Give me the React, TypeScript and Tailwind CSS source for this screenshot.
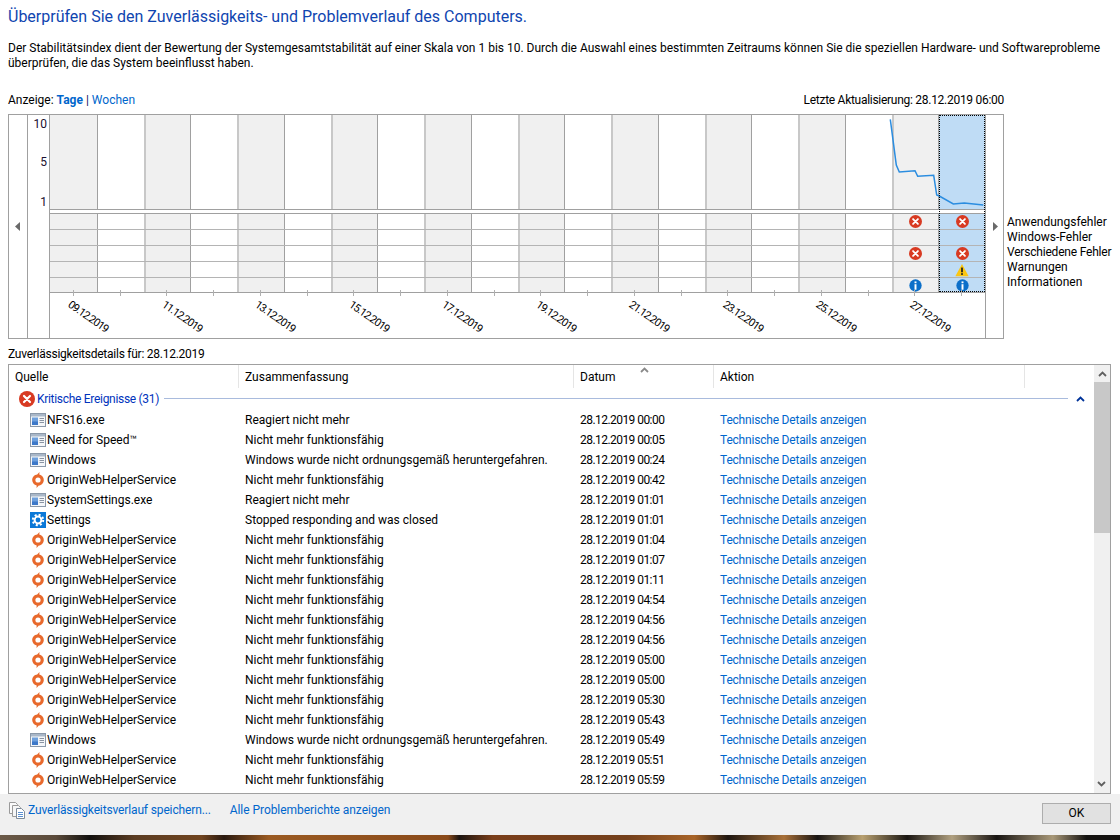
import React from "react";

const COLS = Array.from({ length: 20 }, (_, i) => i);
const DATES: Record<number, string> = { 0: "09.12.2019", 2: "11.12.2019", 4: "13.12.2019", 6: "15.12.2019", 8: "17.12.2019", 10: "19.12.2019", 12: "21.12.2019", 14: "23.12.2019", 16: "25.12.2019", 18: "27.12.2019" };

function ErrorIcon({ size = 13 }: { size?: number }) {
  return (
    <svg width={size} height={size} viewBox="0 0 16 16" className="shrink-0">
      <circle cx="8" cy="8" r="8" fill="#d83a22" />
      <path d="M5 5l6 6M11 5l-6 6" stroke="#fff" strokeWidth="2.2" strokeLinecap="round" />
    </svg>
  );
}
function InfoIcon() {
  return (
    <svg width="13" height="13" viewBox="0 0 16 16" className="shrink-0">
      <circle cx="8" cy="8" r="7.6" fill="#0b6fc9" />
      <rect x="6.8" y="3" width="2.4" height="2.2" fill="#fff" />
      <rect x="6.8" y="6.4" width="2.4" height="6.8" fill="#fff" />
    </svg>
  );
}
function WarnIcon() {
  return (
    <svg width="14" height="14" viewBox="0 0 16 16" className="shrink-0">
      <path d="M8 1L15.6 15H.4z" fill="#fbc612" />
      <rect x="7" y="5.2" width="2" height="5.4" fill="#222" />
      <rect x="7" y="11.6" width="2" height="2" fill="#222" />
    </svg>
  );
}
function AppIcon() {
  return (
    <svg width="16" height="16" viewBox="0 0 16 16" className="shrink-0">
      <rect x="0.5" y="1.5" width="15" height="13" fill="#f4f6f9" stroke="#8b98a8" />
      <rect x="1" y="2" width="14" height="2.5" fill="#a9b7c8" />
      <rect x="2" y="5.5" width="6" height="7.5" fill="#6d9fdc" />
      <rect x="2" y="9.5" width="6" height="3.5" fill="#3d78c8" />
      <path d="M9.5 6.5h4.5M9.5 8.5h4.5M9.5 10.5h4.5" stroke="#8a94a2" />
    </svg>
  );
}
function OriginIcon() {
  return (
    <svg width="16" height="16" viewBox="0 0 16 16" className="shrink-0">
      <path d="M9.5 0L9.3 2.6C12 3.4 13.8 5.5 13.8 8C13.8 11 11.5 13.3 8.8 13.6L6.5 16L6.7 13.4C4 12.7 2.2 10.6 2.2 8C2.2 5 4.5 2.7 7.2 2.4Z" fill="#e8692c" />
      <circle cx="8" cy="8" r="2.6" fill="#fff" />
    </svg>
  );
}
function GearIcon() {
  return (
    <svg width="16" height="16" viewBox="0 0 16 16" className="shrink-0">
      <rect width="16" height="16" fill="#0a78d7" />
      <circle cx="8" cy="8" r="5.2" fill="none" stroke="#fff" strokeWidth="2" strokeDasharray="2.04 2.04" />
      <circle cx="8" cy="8" r="3.4" fill="none" stroke="#fff" strokeWidth="2" />
    </svg>
  );
}
function SaveIcon() {
  return (
    <svg width="16" height="17" viewBox="0 0 16 17" className="shrink-0">
      <path d="M.5.5h6l2 2v9h-8z" fill="#fafafa" stroke="#9a9a9a" />
      <path d="M3.5 3.5h6l2 2v9h-8z" fill="#f6f6f6" stroke="#9a9a9a" />
      <path d="M7.5 6.5h5l3 3v7h-8z" fill="#fff" stroke="#7f8b99" />
      <path d="M9 10.5h5M9 12.5h5M9 14.5h5" stroke="#5b8fd0" />
    </svg>
  );
}
function Tri({ dir }: { dir: "l" | "r" }) {
  return (
    <svg width="6" height="9" viewBox="0 0 6 9">
      <path d={dir === "l" ? "M5 0v9L0 4.5z" : "M1 0v9l5-4.5z"} fill="#6a6a6a" />
    </svg>
  );
}
function Chev({ color, size = 9 }: { color: string; size?: number }) {
  return (
    <svg width={size} height={size - 3} viewBox="0 0 9 6">
      <path d="M1 5l3.5-3.5L8 5" fill="none" stroke={color} strokeWidth="1.8" />
    </svg>
  );
}

function cellBorder(c: number) {
  if (c === 0) return "";
  return c % 2 === 1 ? "border-l border-l-[#a0a0a0]" : "border-l-2 border-l-[#c8c8c8]";
}
function cellBg(c: number) {
  if (c === 19) return "bg-[#bfdcf5]";
  return c % 2 === 0 ? "bg-[#f0f0f0]" : "bg-white";
}

const EVENT_ROWS: Record<number, React.ReactNode>[] = [
  { 18: <ErrorIcon />, 19: <ErrorIcon /> },
  {},
  { 18: <ErrorIcon />, 19: <ErrorIcon /> },
  { 19: <WarnIcon /> },
  { 18: <InfoIcon />, 19: <InfoIcon /> },
];

const NM = "Nicht mehr funktionsfähig";
const RN = "Reagiert nicht mehr";
const WN = "Windows wurde nicht ordnungsgemäß heruntergefahren.";
const OW = "OriginWebHelperService";
const ROWS: [string, string, string, string][] = [
  ["a", "NFS16.exe", RN, "00:00"],
  ["a", "Need for Speed™", NM, "00:05"],
  ["a", "Windows", WN, "00:24"],
  ["o", OW, NM, "00:42"],
  ["a", "SystemSettings.exe", RN, "01:01"],
  ["g", "Settings", "Stopped responding and was closed", "01:01"],
  ["o", OW, NM, "01:04"],
  ["o", OW, NM, "01:07"],
  ["o", OW, NM, "01:11"],
  ["o", OW, NM, "04:54"],
  ["o", OW, NM, "04:56"],
  ["o", OW, NM, "04:56"],
  ["o", OW, NM, "05:00"],
  ["o", OW, NM, "05:00"],
  ["o", OW, NM, "05:30"],
  ["o", OW, NM, "05:43"],
  ["a", "Windows", WN, "05:49"],
  ["o", OW, NM, "05:51"],
  ["o", OW, NM, "05:59"],
];

function Chart() {
  return (
    <div className="ml-2 mt-[6px] flex h-[225px] w-[996px] shrink-0 border border-[#a0a0a0] bg-white">
      <div className="flex w-[19px] items-center justify-center border-r border-[#a0a0a0]">
        <Tri dir="l" />
      </div>
      <div className="flex w-[22px] flex-col items-end border-r border-[#a0a0a0] pr-[2px] pt-[1px] text-[12px] leading-4 text-[#1a1030]">
        <span>10</span>
        <span className="mt-[22px]">5</span>
        <span className="mt-[24px]">1</span>
      </div>
      <div className="relative flex w-[935px] flex-col">
        <div className="relative grid h-[95px] grid-cols-[repeat(20,minmax(0,1fr))] border-b border-[#a0a0a0]">
          {COLS.map((c) => (
            <div key={c} className={`${cellBg(c)} ${cellBorder(c)}`} />
          ))}
          <svg width="935" height="94" viewBox="0 0 935 94" className="absolute left-0 top-0" fill="none">
            <polyline points="840.3,4.3 846.3,50 849.3,57 865,55.7 867.7,61.3 883.7,60.3 886.7,80 889.3,81 903.3,89 914.3,88 933.3,90" stroke="#2b8de0" strokeWidth="1.5" />
          </svg>
        </div>
        <div className="h-[3px] bg-white" />
        <div className="border-t border-[#a0a0a0]">
          {EVENT_ROWS.map((row, r) => (
            <div key={r} className={`grid grid-cols-[repeat(20,minmax(0,1fr))] ${r < 4 ? "h-4 border-b border-[#b4b4b4]" : "h-[14px]"}`}>
              {COLS.map((c) => (
                <div key={c} className={`flex items-center justify-center ${cellBg(c)} ${cellBorder(c)}`}>
                  {row[c]}
                </div>
              ))}
            </div>
          ))}
        </div>
        <div className="grid h-[46px] grid-cols-[repeat(20,minmax(0,1fr))] border-t border-[#a0a0a0]">
          {COLS.map((c) => (
            <div key={c} className="flex flex-col items-center">
              <div className="-mt-[3px] h-[6px] w-px bg-[#b0b0b0]" />
              {DATES[c] && (
                <span className="ml-[0px] mt-[2px] w-0 origin-top-left rotate-[35deg] whitespace-nowrap text-[11px] leading-[13px] tracking-[-0.9px] text-black">
                  {DATES[c]}
                </span>
              )}
            </div>
          ))}
        </div>
        <div className="absolute bottom-[46px] right-0 top-0 w-[46px] border border-dotted border-black" />
      </div>
      <div className="flex w-[18px] items-center justify-center border-l border-[#a0a0a0]">
        <Tri dir="r" />
      </div>
    </div>
  );
}

export default function App() {
  return (
    <div className="flex h-[840px] w-[1120px] flex-col overflow-hidden bg-white text-[12px] text-black [font-family:Roboto,sans-serif]">
      <div className="relative">
        <h1 className="ml-2 mt-[6px] text-[16px] font-normal leading-[22px] text-[#0f45b0]">
          Überprüfen Sie den Zuverlässigkeits- und Problemverlauf des Computers.
        </h1>
        <p className="ml-2 mt-[13px] w-[1100px] text-[12px] leading-[15px]">
          Der Stabilitätsindex dient der Bewertung der Systemgesamtstabilität auf einer Skala von 1 bis 10. Durch die Auswahl eines bestimmten Zeitraums können Sie die speziellen Hardware- und Softwareprobleme überprüfen, die das System beeinflusst haben.
        </p>
        <div className="ml-2 mt-[21px] flex w-[996px] justify-between leading-4">
          <span>
            Anzeige: <span className="font-bold text-[#0066cc]">Tage</span> <span className="text-[#1a1060]">|</span>{" "}
            <span className="text-[#0066cc]">Wochen</span>
          </span>
          <span className="tracking-[-0.28px]">Letzte Aktualisierung: 28.12.2019 06:00</span>
        </div>
        <div className="flex">
          <Chart />
          <div className="ml-[3px] flex flex-col pt-[107px] leading-[15px]">
            <span>Anwendungsfehler</span>
            <span>Windows-Fehler</span>
            <span className="tracking-[-0.2px]">Verschiedene Fehler</span>
            <span>Warnungen</span>
            <span>Informationen</span>
          </div>
        </div>
        <div className="ml-2 mt-[7px] leading-4 tracking-[-0.25px]">Zuverlässigkeitsdetails für: 28.12.2019</div>
      </div>

      <div className="ml-2 mt-[2px] flex h-[430px] w-[1103px] shrink-0 overflow-hidden border border-[#a0a0a0]">
        <div className="flex min-w-0 flex-1 flex-col">
          <div className="relative flex h-[23px] shrink-0 items-center">
            <div className="h-full w-[230px] border-r border-[#e5e5e5] pl-[6px] leading-6">Quelle</div>
            <div className="h-full w-[335px] border-r border-[#e5e5e5] pl-[6px] leading-6">Zusammenfassung</div>
            <div className="h-full w-[140px] border-r border-[#e5e5e5] pl-[6px] leading-6">Datum</div>
            <div className="h-full w-[311px] border-r border-[#e5e5e5] pl-[6px] leading-6">Aktion</div>
            <div className="absolute left-[631px] top-[2px]">
              <Chev color="#8a8a8a" />
            </div>
          </div>
          <div className="flex h-[22px] shrink-0 items-center pb-[1px] pl-[10px]">
            <ErrorIcon size={16} />
            <span className="ml-[2px] tracking-[-0.3px] text-[#0033bc]">Kritische Ereignisse (31)</span>
            <div className="ml-[5px] h-px flex-1 bg-[#a9bbdd]" />
            <div className="ml-[8px] mr-[9px]">
              <Chev color="#003399" />
            </div>
          </div>
          {ROWS.map(([icon, src, sum, time], i) => (
            <div key={i} className="flex h-5 shrink-0 items-center">
              <div className="flex w-[230px] items-center pl-[21px]">
                {icon === "a" ? <AppIcon /> : icon === "o" ? <OriginIcon /> : <GearIcon />}
                <span className="ml-px whitespace-nowrap">{src}</span>
              </div>
              <div className="w-[335px] whitespace-nowrap pl-[6px]">{sum}</div>
              <div className="w-[140px] whitespace-nowrap pl-[6px] tracking-[-0.55px]">28.12.2019 {time}</div>
              <div className="whitespace-nowrap pl-[6px] tracking-[-0.2px] text-[#0066cc]">Technische Details anzeigen</div>
            </div>
          ))}
        </div>
        <div className="flex w-4 shrink-0 flex-col bg-[#f0f0f0]">
          <div className="flex h-[17px] shrink-0 items-center justify-center">
            <Chev color="#606060" />
          </div>
          <div className="h-[151px] bg-[#c8c8c8]" />
          <div className="flex-1" />
          <div className="flex h-[17px] shrink-0 rotate-180 items-center justify-center">
            <Chev color="#606060" />
          </div>
        </div>
      </div>

      <div className="flex h-[41px] shrink-0 items-start bg-[#f0f0f0]">
        <div className="ml-[9px] mt-[8px]">
          <SaveIcon />
        </div>
        <span className="ml-[3px] mt-[8px] leading-4 tracking-[-0.14px] text-[#0066cc]">Zuverlässigkeitsverlauf speichern...</span>
        <span className="ml-[19px] mt-[8px] leading-4 tracking-[-0.05px] text-[#0066cc]">Alle Problemberichte anzeigen</span>
        <button className="ml-auto mr-[9px] mt-[9px] h-[21px] w-[69px] border border-[#adadad] bg-[#e1e1e1] text-[12px] leading-[19px] text-black">
          OK
        </button>
      </div>
      <div className="h-[5px] shrink-0 bg-[linear-gradient(90deg,#6b5a48_0%,#5a4a3a_5%,#12100e_8%,#5a3c22_12%,#70441f_18%,#2a1a10_20%,#9a5a22_24%,#8a4a1a_40%,#1c1410_41%,#7a3e1a_44%,#74401c_56%,#a86428_62%,#1e1610_65%,#a87038_70%,#181412_73%,#b8a070_77%,#1a1612_81%,#b0a080_85%,#181412_89%,#a89878_94%,#141210_97%,#141210_100%)]" />
    </div>
  );
}
